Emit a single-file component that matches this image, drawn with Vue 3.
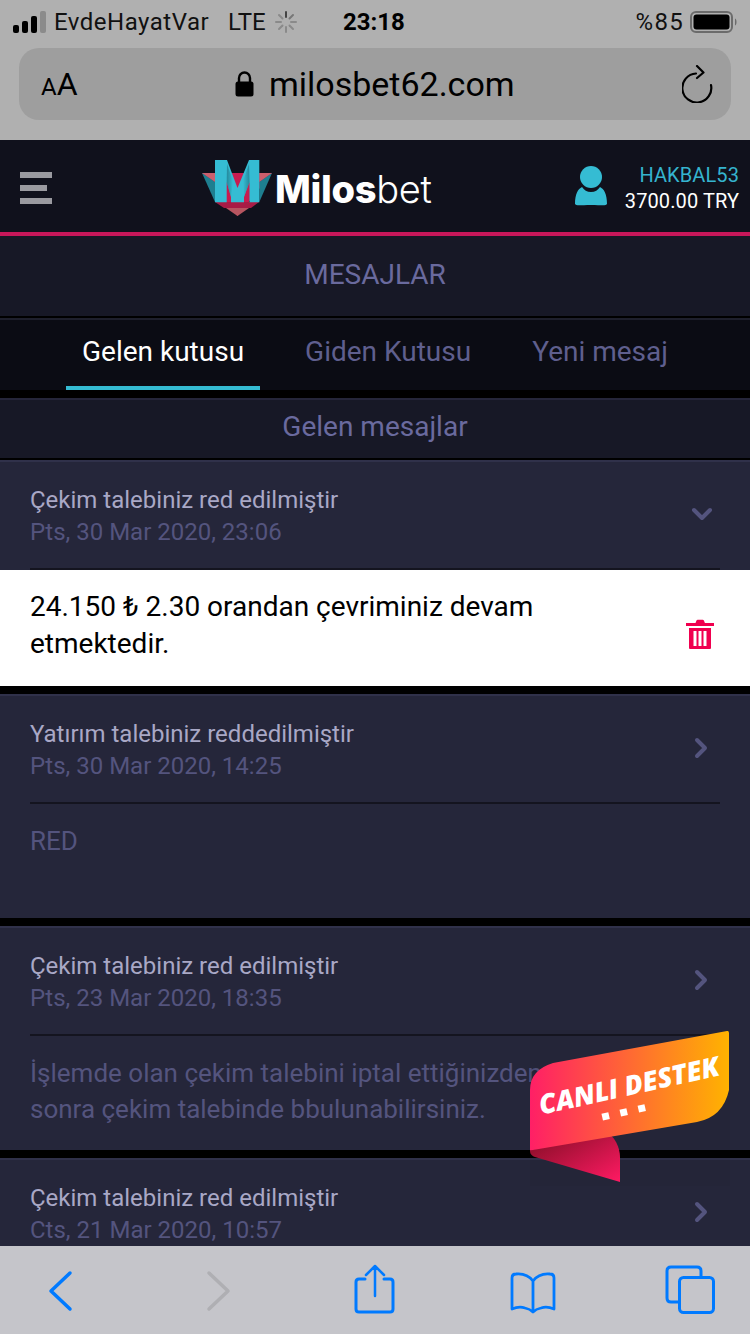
<template>
  <div class="screen">
    <div class="browser-top">
      <div class="status">
        <div class="status-left">
          <svg class="signal" width="34" height="22" viewBox="0 0 34 22">
            <rect x="0" y="14" width="6" height="8" rx="2" fill="#000" />
            <rect x="9" y="10" width="6" height="12" rx="2" fill="#000" />
            <rect x="18" y="5" width="6" height="17" rx="2" fill="#000" />
            <rect x="27" y="0" width="6" height="22" rx="2" fill="#8b8b8b" />
          </svg>
          <span class="carrier">EvdeHayatVar</span>
          <span class="lte">LTE</span>
          <svg class="spinner" width="22" height="22" viewBox="0 0 22 22" stroke-width="2" stroke-linecap="round">
            <path d="M11 1v5" stroke="#444" />
            <path d="M18 4l-3.500 3.500" stroke="#777" />
            <path d="M21 11h-5" stroke="#8a8a8a" />
            <path d="M18 18l-3.500-3.500" stroke="#8a8a8a" />
            <path d="M11 21v-5" stroke="#8a8a8a" />
            <path d="M4 18l3.500-3.500" stroke="#8a8a8a" />
            <path d="M1 11h5" stroke="#8a8a8a" />
            <path d="M4 4l3.500 3.500" stroke="#8a8a8a" />
          </svg>
        </div>
        <span class="clock">23:18</span>
        <div class="status-right">
          <span class="percent">%85</span>
          <svg width="48" height="22" viewBox="0 0 48 22">
            <rect x="1" y="1" width="41" height="20" rx="5" fill="none" stroke="#6b6b6b" stroke-width="2" />
            <rect x="3.500" y="3.500" width="36" height="15" rx="3" fill="#000" />
            <path d="M45 7.500c2 .5 2 6.500 0 7z" fill="#6b6b6b" />
          </svg>
        </div>
      </div>
      <div class="urlbar">
        <span class="aa"><small>A</small>A</span>
        <div class="url">
          <svg width="19" height="26" viewBox="0 0 19 26">
            <path d="M4 12V7a5.500 5.500 0 0 1 11 0v5" fill="none" stroke="#000" stroke-width="2.400" />
            <rect x="0.500" y="10.500" width="18" height="15" rx="2.500" fill="#000" />
          </svg>
          <span>milosbet62.com</span>
        </div>
        <svg class="reload" width="32" height="38" viewBox="0 0 32 38" fill="none" stroke="#000" stroke-width="2.200" stroke-linecap="round" stroke-linejoin="round">
          <path d="M14 8.500A14.500 14.500 0 1 0 29 20" />
          <path d="M15 1l6.500 6.500L15 13" />
        </svg>
      </div>
    </div>

    <main class="content">
      <header class="site-header">
        <div class="burger">
          <i></i>
          <i class="short"></i>
          <i></i>
        </div>
        <div class="logo">
          <svg width="72" height="60" viewBox="0 0 72 60">
            <defs>
              <linearGradient id="foldL" x1="0" y1="0" x2="1" y2="0">
                <stop offset="0" stop-color="#1a6676" />
                <stop offset="1" stop-color="#35bcd3" />
              </linearGradient>
              <linearGradient id="foldR" x1="1" y1="0" x2="0" y2="0">
                <stop offset="0" stop-color="#1a6676" />
                <stop offset="1" stop-color="#35bcd3" />
              </linearGradient>
            </defs>
            <path d="M0 15h70L35.500 58z" fill="#c71c50" />
            <path d="M0 15h13v9z" fill="#cc5f6c" />
            <path d="M70 15H57.300v9z" fill="#cc5f6c" />
            <path d="M0 15l13 9v20z" fill="#1e7f90" />
            <path d="M70 15l-12.700 9v20z" fill="#1e7f90" />
            <path d="M13 44h44L49 50H22z" fill="#a81b45" />
            <path d="M24 50h23L35.500 58z" fill="#b75560" />
            <path d="M13 2h12l10.500 28L47 2h10.300v42.300h-9.800V24L42 39v5.300H29V39l-4.300-15v20.300H13z" fill="#35bcd3" />
            <path d="M25 6l6 17-2 16-4.300-15z" fill="url(#foldL)" opacity=".6" />
            <path d="M47 6l-6 17 1 16 5.500-15z" fill="url(#foldR)" opacity=".6" />
          </svg>
          <span class="wordmark"><b>Milos</b>bet</span>
        </div>
        <div class="account">
          <svg width="32" height="40" viewBox="0 0 32 40" fill="#35bcd3">
            <circle cx="16" cy="11" r="11" />
            <path d="M7 21c2 3 5 5 9 5s7-2 9-5c4 2 7 7 7 17-1 2-5 1-16 1S1 40 0 38c0-10 3-15 7-17z" />
          </svg>
          <div class="account-text">
            <span class="username">HAKBAL53</span>
            <span class="balance">3700.00 TRY</span>
          </div>
        </div>
      </header>

      <div class="page-title">MESAJLAR</div>

      <nav class="tabs">
        <span
          v-for="(tab, i) in tabs"
          :key="tab"
          :class="['tab', { active: i === 0 }]"
        >{{ tab }}</span>
      </nav>

      <div class="inbox-title">Gelen mesajlar</div>

      <section v-for="m in messages" :key="m.title + m.date" class="message">
        <div class="message-head">
          <div>
            <div class="message-title">{{ m.title }}</div>
            <div class="message-date">{{ m.date }}</div>
          </div>
          <svg v-if="m.open" class="chev" width="22" height="14" viewBox="0 0 22 14" fill="none" stroke="#54547e" stroke-width="4" stroke-linecap="round" stroke-linejoin="round">
            <path d="M3 3l8 8 8-8" />
          </svg>
          <svg v-else class="chev" width="22" height="22" viewBox="0 0 22 22" fill="none" stroke="#54547e" stroke-width="4" stroke-linecap="round" stroke-linejoin="round">
            <path d="M6 3l8 8-8 8" />
          </svg>
        </div>
        <div v-if="m.open" class="message-open">
          <p>{{ m.body }}</p>
          <svg class="trash" width="28" height="31" viewBox="0 0 28 31" fill="#f0004f">
            <path d="M0 5h9.500l1-2.500q.3-.8 1.200-.8h5q.9 0 1.200.8l1 2.500H28v3H0z" />
            <path d="M3 10h22v20q0 1-1 1H4q-1 0-1-1zm4.500 3v15h3V13zm5 0v15h3V13zm5 0v15h3V13z" fill-rule="evenodd" />
          </svg>
        </div>
        <div v-else class="message-body">{{ m.body }}</div>
      </section>
    </main>

    <div class="live-support">
      <svg width="200" height="156" viewBox="0 0 200 156">
        <defs>
          <linearGradient id="ribbon" x1="0" y1="0" x2="1" y2="0">
            <stop offset="0" stop-color="#ff1f66" />
            <stop offset="1" stop-color="#ffb300" />
          </linearGradient>
          <linearGradient id="tail" x1="0" y1="0" x2="1" y2="1">
            <stop offset="0" stop-color="#7d0d22" />
            <stop offset="1" stop-color="#ff1a63" />
          </linearGradient>
        </defs>
        <path d="M0 120.500c0 3 1 5 5 6.500l85 25v-25c0-9-5-21-15-26z" fill="url(#tail)" />
        <path d="M197 1q2-.500 2 2v57q-6 27-32 32L0 120.500V60q0-20 23-27z" fill="url(#ribbon)" />
        <g transform="rotate(-12.500 100 60)">
          <text x="100" y="65" text-anchor="middle" class="ribbon-text">CANLI DESTEK</text>
          <rect x="67" y="77" width="7" height="7" fill="#fff" />
          <rect x="85.500" y="77" width="7" height="7" fill="#fff" />
          <rect x="104" y="77" width="7" height="7" fill="#fff" />
        </g>
      </svg>
    </div>

    <footer class="toolbar">
      <svg width="750" height="88" viewBox="0 0 750 88" fill="none" stroke="#007aff" stroke-width="3" stroke-linecap="round" stroke-linejoin="round">
        <path d="M70 27L51 45l19 18" stroke-width="3.500" />
        <path d="M209 27l19 18-19 18" stroke="#afafb3" stroke-width="3.500" />
        <path d="M365 33h-6q-3 0-3 3v27q0 3 3 3h31q3 0 3-3V36q0-3-3-3h-6" />
        <path d="M375 50V20M366 29l9-9 9 9" stroke-width="2.500" />
        <path d="M533 35q-6-8-17-7-4 0-4 4v31q7-3 13-1 5 1 8 4 3-3 8-4 6-2 13 1V32q0-4-4-4-11-1-17 7v29" stroke-width="2.800" />
        <path d="M678 56h-7q-4 0-4-4V25q0-4 4-4h26q4 0 4 4v5" />
        <rect x="679.500" y="31.500" width="34" height="35" rx="4" />
      </svg>
    </footer>
  </div>
</template>

<script setup>
const tabs = ['Gelen kutusu', 'Giden Kutusu', 'Yeni mesaj']

const messages = [
  {
    title: 'Çekim talebiniz red edilmiştir',
    date: 'Pts, 30 Mar 2020, 23:06',
    body: '24.150 ₺ 2.30 orandan çevriminiz devam etmektedir.',
    open: true,
  },
  {
    title: 'Yatırım talebiniz reddedilmiştir',
    date: 'Pts, 30 Mar 2020, 14:25',
    body: 'RED',
  },
  {
    title: 'Çekim talebiniz red edilmiştir',
    date: 'Pts, 23 Mar 2020, 18:35',
    body: 'İşlemde olan çekim talebini iptal ettiğinizden sonra çekim talebinde bbulunabilirsiniz.',
  },
  {
    title: 'Çekim talebiniz red edilmiştir',
    date: 'Cts, 21 Mar 2020, 10:57',
    body: '',
  },
]
</script>

<style>
html,
body {
  margin: 0;
  background: #000;
}
</style>

<style scoped>
.screen {
  position: relative;
  width: 750px;
  height: 1334px;
  display: flex;
  flex-direction: column;
  overflow: hidden;
  font-family: Roboto, "Liberation Sans", sans-serif;
  background: #000;
}

/* browser chrome */
.browser-top {
  flex: none;
  height: 140px;
  background: #b0b0b0;
  box-sizing: border-box;
  color: #000;
}

.status {
  position: relative;
  height: 48px;
  display: flex;
  align-items: center;
  justify-content: space-between;
  padding: 0 12px 5px 13px;
  box-sizing: border-box;
  font-size: 24px;
}

.status-left,
.status-right {
  display: flex;
  align-items: center;
}

.carrier {
  margin-left: 7px;
  color: #111;
  letter-spacing: 0.5px;
}

.lte {
  margin-left: 19px;
  color: #111;
}

.spinner {
  margin-left: 9px;
}

.clock {
  position: absolute;
  left: 343px;
  font-weight: 700;
  font-size: 24px;
}

.percent {
  margin-right: 6px;
  color: #111;
  letter-spacing: 1.3px;
}

.urlbar {
  height: 72px;
  margin: 0 19px;
  padding: 0 17px 0 22px;
  display: flex;
  align-items: center;
  justify-content: space-between;
  background: #9e9e9e;
  border-radius: 20px;
}

.aa {
  font-size: 32px;
  line-height: 1;
}

.aa small {
  font-size: 24px;
}

.url {
  display: flex;
  align-items: center;
  gap: 15px;
  font-size: 34px;
  margin-right: 10px;
}

/* site */
.content {
  flex: 1;
  min-height: 0;
  overflow: hidden;
  background: #000;
}

.site-header {
  height: 92px;
  display: flex;
  align-items: center;
  background: #10111c;
  border-bottom: 4px solid #c8175a;
  box-sizing: content-box;
}

.burger {
  width: 32px;
  margin-left: 20px;
  margin-top: 4px;
  display: flex;
  flex-direction: column;
  gap: 7px;
}

.burger i {
  display: block;
  height: 6px;
  background: #9a9aa0;
}

.burger i.short {
  width: 27px;
}

.logo {
  display: flex;
  align-items: center;
  margin-left: 150px;
  margin-top: 3px;
}

.wordmark {
  margin-left: 1px;
  margin-top: 2px;
  font-family: Inter, sans-serif;
  font-size: 38px;
  font-weight: 300;
  color: #fff;
  letter-spacing: -0.3px;
}

.wordmark b {
  font-weight: 800;
}

.account {
  margin-left: auto;
  margin-right: 11px;
  display: flex;
  align-items: center;
  gap: 18px;
}

.account-text {
  display: flex;
  flex-direction: column;
  align-items: flex-end;
  margin-top: 4px;
  font-size: 20px;
  line-height: 26px;
  letter-spacing: 0.1px;
}

.username {
  color: #35b4cf;
}

.balance {
  color: #fff;
}

.page-title {
  height: 80px;
  line-height: 78px;
  text-align: center;
  font-size: 28px;
  color: #6a6a9e;
  background: #171826;
}

.tabs {
  height: 70px;
  margin-top: 2px;
  border-top: 2px solid #1e1f2c;
  display: flex;
  justify-content: center;
  gap: 29px;
  background: #0b0c14;
}

.tab {
  padding: 0 16px;
  border-bottom: 4px solid transparent;
  line-height: 64px;
  font-size: 28px;
  color: #5f5f8e;
}

.tab.active {
  color: #fff;
  border-bottom-color: #35bcd3;
}

.inbox-title {
  height: 58px;
  line-height: 54px;
  margin-top: 8px;
  border-top: 2px solid #25263a;
  text-align: center;
  font-size: 28px;
  color: #6a6a9e;
  background: #171826;
}

.message {
  margin-top: 2px;
  margin-bottom: 8px;
  background: #25263a;
  border-top: 2px solid #30314a;
}

.message + .message {
  margin-top: 0;
}

.message-head {
  display: flex;
  align-items: center;
  justify-content: space-between;
  margin: 0 30px;
  padding: 22px 7px 20px 0;
  border-bottom: 2px solid #14141f;
}

.chev {
  margin-bottom: 4px;
}

.message-title {
  font-size: 24px;
  line-height: 32px;
  color: #a9a8c6;
}

.message-date {
  font-size: 24px;
  line-height: 32px;
  color: #54547e;
}

.message-body {
  box-sizing: border-box;
  min-height: 114px;
  padding: 19px 170px 0 30px;
  font-size: 26px;
  line-height: 36px;
  color: #54547e;
}

.message-open {
  height: 116px;
  padding: 0 36px 0 30px;
  display: flex;
  align-items: center;
  justify-content: space-between;
  box-sizing: border-box;
  background: #fff;
  color: #000;
}

.message-open p {
  margin: 0 0 6px;
  width: 580px;
  font-size: 28px;
  line-height: 37px;
}

.trash {
  margin-top: 11px;
}

/* floating badge over the list */
.live-support {
  position: absolute;
  left: 530px;
  top: 1030px;
  width: 200px;
  height: 156px;
  background: rgba(23, 24, 38, 0.08);
}

.live-support svg {
  display: block;
}

.ribbon-text {
  font-family: "Open Sans", sans-serif;
  font-size: 27px;
  font-weight: 800;
  font-style: italic;
  fill: #fff;
}

.toolbar {
  flex: none;
  height: 88px;
  background: #c5c5ca;
}

.toolbar svg {
  display: block;
}
</style>
